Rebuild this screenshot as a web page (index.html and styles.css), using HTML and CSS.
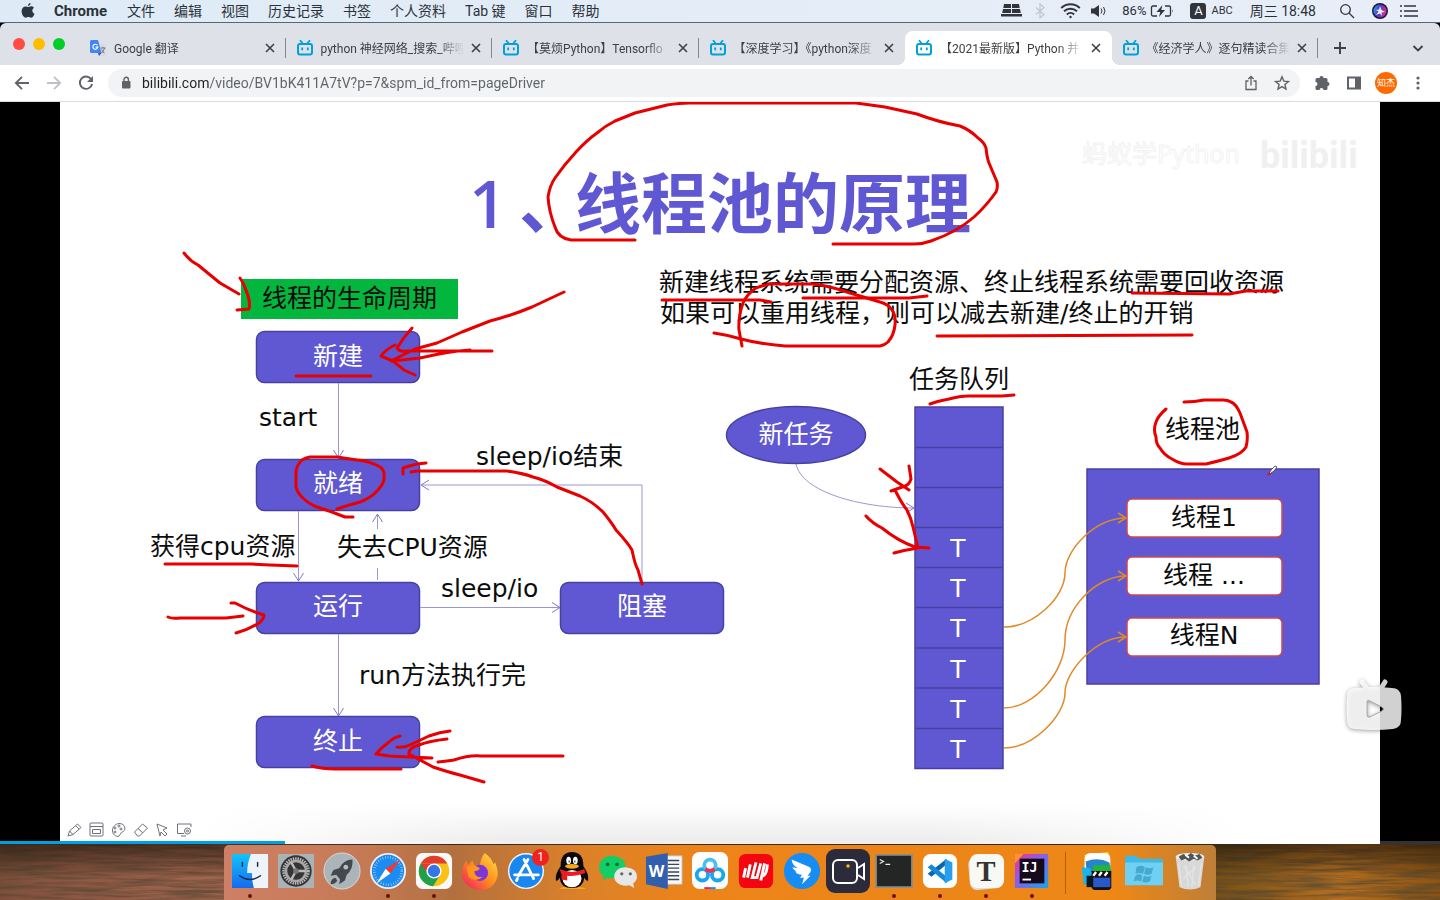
FILE: index.html
```html
<!DOCTYPE html>
<html lang="zh-CN">
<head>
<meta charset="utf-8">
<title>线程池的原理</title>
<link rel="stylesheet" href="styles.css">
</head>
<body>
<svg class="defs" width="0" height="0" aria-hidden="true">
  <symbol id="bili" viewBox="0 0 16 16"><path d="M3.500 .8l2 2.500M12.500 .8l-2 2.500" stroke="#00a1d6" stroke-width="1.800" stroke-linecap="round"/><rect x="1" y="4" width="14" height="10.500" rx="2" fill="none" stroke="#00a1d6" stroke-width="2"/><path d="M5.200 7.500v2.800M10.800 7.500v2.800" stroke="#00a1d6" stroke-width="1.800"/></symbol>
  <symbol id="x" viewBox="0 0 16 16"><path d="M4 4l8 8M12 4l-8 8" stroke="#3c4043" stroke-width="1.600"/></symbol>
</svg>

<header class="menubar">
  <svg class="apple" width="16" height="18" viewBox="0 0 16 18"><path fill="#2c3640" d="M10.600 1c.1 1.600-1.200 3-2.700 3C7.800 2.500 9.100 1.100 10.600 1zM8.200 5c.7 0 1.600-.8 3-.8 1.200 0 2.200.6 2.800 1.500-2.500 1.500-2 5 .5 6-.6 1.900-2 4-3.400 4-1 0-1.500-.6-2.700-.6s-1.700.6-2.700.6C3.800 15.700 1.600 12.500 1.600 9.300c0-3.200 2-4.900 3.900-4.900 1.200 0 2 .6 2.700.6z"/></svg>
  <nav class="menus">
    <button class="app-name">Chrome</button><button>文件</button><button>编辑</button><button>视图</button><button>历史记录</button><button>书签</button><button>个人资料</button><button>Tab 键</button><button>窗口</button><button>帮助</button>
  </nav>
  <div class="status">
    <svg width="21" height="16" viewBox="0 0 21 16" fill="#2f353b"><path d="M3 1h7v4H2.300zM11 1h7l.7 4H11zM2 6h8v4H1.200zM11 6h8l.8 4H11zM0 11h21v2.500H0z"/></svg>
    <svg class="bt" width="12" height="16" viewBox="0 0 12 16"><path d="M2 4.500l8 7-4 3.500V1l4 3.500-8 7" fill="none" stroke="#c0c6cd" stroke-width="1.200"/></svg>
    <svg class="wifi" width="21" height="16" viewBox="0 0 21 16" fill="none" stroke="#2f353b" stroke-width="1.900"><path d="M1.200 5a13.500 13.500 0 0 1 18.600 0M4 8.300a9.500 9.500 0 0 1 13 0M6.800 11.500a5.500 5.500 0 0 1 7.400 0"/><circle cx="10.500" cy="14" r="1.200" fill="#2f353b" stroke="none"/></svg>
    <svg class="vol" width="18" height="16" viewBox="0 0 18 16"><path d="M1 5.500h3L9 2v12l-5-3.500H1z" fill="#2f353b"/><path d="M11 5.500q2 2.500 0 5M13.500 4q3 4 0 8" fill="none" stroke="#2f353b"/></svg>
    <span class="pct">86%</span>
    <svg class="bat" width="24" height="16" viewBox="0 0 24 16"><path d="M7 3H3Q1.500 3 1.500 4.500v7Q1.500 13 3 13h4M15 3h4q1.500 0 1.500 1.500v7q0 1.500-1.500 1.500h-4" fill="none" stroke="#2f353b" stroke-width="1.300"/><path d="M12.500 2L6.500 9h3.800L9 14l6-7h-3.800zM22 6.500q1.500 1.500 0 3z" fill="#2f353b"/></svg>
    <span class="ime-box">A</span><span class="ime">ABC</span>
    <span class="clock">周三 18:48</span>
    <svg class="find" width="16" height="16" viewBox="0 0 16 16" fill="none" stroke="#2f353b" stroke-width="1.300"><circle cx="6.500" cy="6.500" r="4.800"/><path d="M10 10l5 5"/></svg>
    <svg class="siri" width="16" height="16" viewBox="0 0 16 16"><defs><linearGradient id="sg" x2="1" y2=".3"><stop stop-color="#29b8f0"/><stop offset=".5" stop-color="#4b38c8"/><stop offset="1" stop-color="#d02f8f"/></linearGradient></defs><circle cx="8" cy="8" r="8" fill="#171a3c"/><circle cx="8" cy="8" r="6.500" fill="url(#sg)"/><path d="M8 3l1.500 4L13 9 9.500 9.500 10 13 8 10.500 4 12l2.500-3.500L4 7l3-.5z" fill="#dff4ff"/></svg>
    <svg class="list" width="18" height="16" viewBox="0 0 18 16" stroke="#2f353b" stroke-width="1.700"><path d="M0 3h2M4 3h12M0 8h2M4 8h14M0 13h2M4 13h14"/></svg>
  </div>
</header>

<div class="tabstrip">
  <div class="lights"><button class="red" aria-label="关闭"></button><button class="yellow" aria-label="最小化"></button><button class="green" aria-label="缩放"></button></div>
  <div class="tabs">
    <div class="tab"><svg width="16" height="16" viewBox="0 0 16 16"><path d="M6 4h10v12H9z" fill="#dadce0"/><path d="M0 1.500Q0 0 1.500 0H8l3.500 13H1.500Q0 13 0 11.500z" fill="#4285f4"/><path d="M8 13h3.500L9 16z" fill="#3a4fc0"/><path d="M7.500 5.500A2.500 2.500 0 1 0 7.800 7.200H5.500" fill="none" stroke="#fff" stroke-width="1.200"/><path d="M10.500 8h5M13 6.800V8M14.500 8q-1 4-3 5M11.500 9.500q1 3 3 3.500" fill="none" stroke="#6b7178" stroke-width=".9"/></svg><button class="title">Google 翻译</button><button class="close" aria-label="关闭标签页"><svg><use href="#x"/></svg></button></div>
    <div class="tab"><svg width="16" height="16"><use href="#bili"/></svg><button class="title">python 神经网络_搜索_哔哩</button><button class="close" aria-label="关闭标签页"><svg><use href="#x"/></svg></button></div>
    <div class="tab"><svg width="16" height="16"><use href="#bili"/></svg><button class="title">【莫烦Python】Tensorflo</button><button class="close" aria-label="关闭标签页"><svg><use href="#x"/></svg></button></div>
    <div class="tab before"><svg width="16" height="16"><use href="#bili"/></svg><button class="title">【深度学习】《python深度</button><button class="close" aria-label="关闭标签页"><svg><use href="#x"/></svg></button></div>
    <div class="tab active"><svg width="16" height="16"><use href="#bili"/></svg><button class="title">【2021最新版】Python 并</button><button class="close" aria-label="关闭标签页"><svg><use href="#x"/></svg></button></div>
    <div class="tab"><svg width="16" height="16"><use href="#bili"/></svg><button class="title">《经济学人》逐句精读合集</button><button class="close" aria-label="关闭标签页"><svg><use href="#x"/></svg></button></div>
  </div>
  <div class="strip-end">
    <button aria-label="新标签页"><svg width="14" height="14" viewBox="0 0 14 14"><path d="M7 1v12M1 7h12" stroke="#3c4043" stroke-width="1.900"/></svg></button>
    <button aria-label="搜索标签页"><svg width="12" height="14" viewBox="0 0 12 14"><path d="M1.500 5l4.500 4.500L10.500 5" fill="none" stroke="#3c4043" stroke-width="1.800"/></svg></button>
  </div>
</div>

<div class="toolbar">
  <button aria-label="返回"><svg width="16" height="16" viewBox="0 0 16 16"><path d="M15 8H2M8 1.800L1.800 8 8 14.200" fill="none" stroke="#5f6368" stroke-width="1.800"/></svg></button>
  <button aria-label="前进"><svg width="16" height="16" viewBox="0 0 16 16"><path d="M1 8h13M8 1.800L14.200 8 8 14.200" fill="none" stroke="#bdc1c6" stroke-width="1.800"/></svg></button>
  <button aria-label="重新加载"><svg width="16" height="16" viewBox="0 0 16 16"><path d="M13.200 4.200A6.200 6.200 0 1 0 14.100 9" fill="none" stroke="#5f6368" stroke-width="1.900"/><path d="M15 1v6H9z" fill="#5f6368"/></svg></button>
  <div class="omnibox">
    <svg width="10" height="14" viewBox="0 0 10 14"><rect x="1" y="5" width="8.500" height="7.500" rx="1" fill="#5f6368"/><path d="M3 5V3.500a2.200 2.200 0 0 1 4.400 0V5" fill="none" stroke="#5f6368" stroke-width="1.400"/></svg>
    <input class="url" aria-label="地址和搜索栏" value="bilibili.com/video/BV1bK411A7tV?p=7&amp;spm_id_from=pageDriver">
    <button aria-label="分享"><svg width="14" height="16" viewBox="0 0 14 16" fill="none" stroke="#5f6368" stroke-width="1.300"><path d="M4.500 6H2v8.500h10V6H9.500M7 10.500V1.800M4.300 4L7 1.500 9.700 4"/></svg></button>
    <button aria-label="为此标签页添加书签"><svg width="16" height="16" viewBox="0 0 16 16"><path d="M8 1.800l1.800 4.300 4.700.4-3.600 3 1.100 4.600L8 11.600l-4 2.500 1.100-4.600-3.600-3 4.700-.4z" fill="none" stroke="#5f6368" stroke-width="1.400"/></svg></button>
  </div>
  <button aria-label="扩展程序"><svg width="16" height="16" viewBox="0 0 16 16"><path fill="#5f6368" d="M1.500 4.500Q1.500 3 3 3h2.500a2 2 0 1 1 4 0H12q1.500 0 1.500 1.500V7a2 2 0 1 1 0 4v2.500Q13.500 15 12 15H9.500a2 2 0 0 0-4 0H3q-1.500 0-1.500-1.500V11a2 2 0 0 0 0-4z"/></svg></button>
  <button aria-label="侧边栏"><svg width="16" height="16" viewBox="0 0 16 16"><path fill="#5f6368" fill-rule="evenodd" d="M1 1.500h14v13H1zM3 3.500v9h6v-9z"/></svg></button>
  <button class="avatar" aria-label="个人资料">知杰</button>
  <button aria-label="更多"><svg width="16" height="16" viewBox="0 0 16 16" fill="#5f6368"><circle cx="8" cy="3" r="1.600"/><circle cx="8" cy="8" r="1.600"/><circle cx="8" cy="13" r="1.600"/></svg></button>
</div>

<main class="stage">
<svg class="slide" viewBox="60 102 1320 742" role="img" aria-label="线程池的原理">
  <defs>
    <marker id="ab" viewBox="0 0 10 12" markerWidth="10" markerHeight="12" refX="9" refY="6" orient="auto" markerUnits="userSpaceOnUse"><path d="M1 1l8 5-8 5" fill="none" stroke="#7f7ac8"/></marker>
    <marker id="ao" viewBox="0 0 10 12" markerWidth="10" markerHeight="12" refX="9" refY="6" orient="auto" markerUnits="userSpaceOnUse"><path d="M1 1l8 5-8 5" fill="none" stroke="#e08a28" stroke-width="1.500"/></marker>
    <linearGradient id="fade" x2="0" y2="1"><stop stop-color="#000" stop-opacity="0"/><stop offset="1" stop-color="#000" stop-opacity=".08"/></linearGradient>
    <linearGradient id="side"><stop stop-color="#fff"/><stop offset=".3" stop-color="#fff" stop-opacity="0"/><stop offset=".7" stop-color="#fff" stop-opacity="0"/><stop offset="1" stop-color="#fff"/></linearGradient>
  </defs>
  <rect x="60" y="102" width="1320" height="742" fill="#fff"/>
  <rect x="200" y="804" width="1040" height="40" fill="url(#fade)"/><rect x="200" y="804" width="1040" height="40" fill="url(#side)"/>
  <g class="watermark"><text x="1082" y="163" class="wm-name">蚂蚁学Python</text><text x="1260" y="168" class="wm-logo">bilibili</text></g>
  <text class="headline" y="228"><tspan class="numeral" x="469">1</tspan><tspan x="519">、</tspan><tspan x="575">线程池的原理</tspan></text>
  <rect x="241" y="279" width="217" height="40" fill="#03b63e"/>

  <g class="node">
    <rect x="256.500" y="331.500" width="163" height="51" rx="8"/><rect x="256.500" y="459.500" width="163" height="51" rx="8"/><rect x="256.500" y="582.500" width="163" height="51" rx="8"/><rect x="560.500" y="582.500" width="163" height="51" rx="8"/><rect x="256.500" y="716.500" width="163" height="51" rx="8"/>
    <ellipse cx="796" cy="435" rx="69.500" ry="28.500"/>
    <rect x="915" y="407" width="88" height="361.500"/><path d="M915 447.500h88M915 487.500h88M915 527.500h88M915 567.500h88M915 607.500h88M915 648h88M915 688h88M915 728.500h88"/>
    <rect x="1087" y="469" width="232" height="215"/>
  </g>
  <g class="worker"><rect x="1127" y="499" width="155" height="38" rx="5"/><rect x="1127" y="557" width="155" height="38" rx="5"/><rect x="1127" y="618" width="155" height="38" rx="5"/></g>
  <g class="flow">
    <path d="M338.500 383v75"/><path d="M298.500 511v70"/><path d="M377.500 529v-15"/><path d="M338.500 634v82"/><path d="M420 607.500h140"/><path d="M642 582V485H421"/><path d="M796 464C802 492 860 508 914 508"/>
  </g>
  <path d="M377.500 568v12" stroke="#9b97d2"/>
  <g class="dispatch"><path d="M1004 627C1034 627 1065 597 1065 573S1096 518 1126 518"/><path d="M1004 708C1034 708 1065 672 1065 640S1096 576 1126 576"/><path d="M1004 748C1034 748 1065 715 1065 693S1096 637 1126 637"/></g>

  <g class="label">
    <text x="262" y="307">线程的生命周期</text><text x="259" y="426">start</text><text x="476" y="465">sleep/io结束</text><text x="150" y="555">获得cpu资源</text><text x="337" y="556">失去CPU资源</text><text x="441" y="597">sleep/io</text><text x="359" y="684">run方法执行完</text>
    <text x="659" y="291">新建线程系统需要分配资源、终止线程系统需要回收资源</text><text x="660" y="322">如果可以重用线程，则可以减去新建/终止的开销</text>
    <text x="909" y="388">任务队列</text><text x="1165" y="438">线程池</text>
    <g class="mid"><text x="1204" y="526">线程1</text><text x="1204" y="584">线程 ...</text><text x="1204" y="644">线程N</text></g>
    <g class="mid light"><text x="338" y="365">新建</text><text x="338" y="492">就绪</text><text x="338" y="615">运行</text><text x="642" y="615">阻塞</text><text x="338" y="750">终止</text><text x="796" y="443">新任务</text>
    <text x="958" y="557">T</text><text x="958" y="597">T</text><text x="958" y="637">T</text><text x="958" y="678">T</text><text x="958" y="718">T</text><text x="958" y="758">T</text></g>
  </g>

  <g class="ink">
    <path d="M635 240H571Q558 238 555 227Q549 212 548 197Q550 185 555 178Q564 165 576 152Q587 140 597 133Q605 126 615 121L635 113L667 105Q680 103 689 103H856L885 107L917 114Q938 122 960 126Q970 130 978 138Q984 142 986 148Q987 158 989 163L997 182Q998 188 996 192Q987 205 974 217Q957 232 931 241Q923 244 914 244H833"/>
    <path d="M184 253Q190 261 198 265L220 283L239 294M240 278Q244 284 245 288Q251 301 249 309L237 310"/>
    <path d="M564 292L532 307Q513 315 490 321L462 332L437 343L415 349L391 361M395 345Q385 350 381 356L393 361L404 370L415 375M412 328Q403 338 397 348Q399 352 407 351H492M470 350Q450 351 420 358L392 361M296 376H371"/>
    <path d="M337 509Q349 505 360 502Q371 498 378 490Q385 482 384 477Q385 470 380 467Q370 461 357 460L337 457H310Q305 458 302 460Q296 466 296 472V487Q298 494 303 498Q309 504 317 507Q330 511 345 517H353"/>
    <path d="M403 474V468Q409 466 417 464L426 463M411 472L417 471H507Q522 473 533 477Q545 480 557 487L580 496Q593 502 603 512Q612 523 616 530Q628 543 632 550Q635 565 638 570L642 584"/>
    <path d="M165 564H251L270 565L297 566M168 617Q172 619 180 618H226L243 616M231 603H235Q250 611 264 615Q264 619 259 623Q248 630 236 633M312 766Q322 769 335 769H401"/>
    <path d="M400 736Q393 738 389 742Q381 748 376 754L389 756L432 758M397 747Q405 748 412 744L429 736Q440 732 450 731M447 739Q429 741 419 745Q408 748 409 754L433 767Q448 772 460 775L484 782M438 762Q448 761 454 760Q469 755 481 756H563"/>
    <path d="M662 300H760L771 302M803 298H909L927 296M1132 293L1229 294L1246 291H1278M937 336L1192 335"/>
    <path d="M714 333Q728 335 741 339Q760 344 785 346H880Q885 345 888 342Q894 335 895 325Q896 315 892 310Q888 304 880 302L850 293Q830 286 813 284H770Q760 286 756 288Q747 294 743 303Q738 317 739 330L742 346"/>
    <path d="M930 404Q938 401 949 399Q960 396 968 396H1002L1014 395M1166 409Q1158 416 1156 422Q1153 430 1156 437Q1156 444 1160 448Q1164 455 1172 459Q1180 464 1187 464H1206Q1219 461 1229 458Q1242 454 1246 447Q1248 440 1247 432L1240 413Q1236 404 1231 402Q1228 400 1223 400H1204Q1195 402 1184 402"/>
    <path d="M880 469L897 482L909 490M909 466Q910 472 911 479Q909 485 905 486L891 491M895 490Q902 504 907 510Q911 518 913 527L918 548M866 516Q872 523 882 528Q898 541 915 547L929 548M894 553Q905 550 918 548"/>
  </g>
  <path d="M1268 475l3-5 4-4 2 1-3 4z" fill="#fff" stroke="#333" stroke-width=".8"/><path d="M1267 476l2-4 2 2z" fill="#d11"/>
  <g class="pen-tools" fill="none" stroke="#70707a">
    <path d="M68 836l1.500-5 8-7 3.500 3.500-8 7zM69.500 831l3.500 3.500M76 826l3 3"/>
    <rect x="90" y="823" width="13" height="13" rx="1"/><path d="M90 826.500h13M92.500 829.500h8v4h-8z"/>
    <path d="M118 836.500c-8-1-7-12 1-13 7 0 7 7 4 8s-3 5-5 5z"/><circle cx="115" cy="828" r="1"/><circle cx="119" cy="826" r="1"/><circle cx="115" cy="832" r="1"/><circle cx="121" cy="829" r="1"/>
    <path d="M134.500 832l8-8 5 4-8 8h-2zM138 828.500l5 4.500"/>
    <path d="M157 824l10 4-4 2 4 4-2 2-4-4-1 4z"/>
    <path d="M184 833.500h-6.500V824H191v3M181 836h5"/><circle cx="187.500" cy="831" r="3"/><circle cx="187.500" cy="831" r="1"/>
  </g>
</svg>
<div class="scrub"><div class="played"></div></div>
<button class="badge" aria-label="播放"><svg width="60" height="60" viewBox="0 0 60 60"><g opacity=".82"><path d="M18 4l6 8M41 4l-5 8" stroke="#fff" stroke-width="5" stroke-linecap="round"/><path fill="#fff" fill-rule="evenodd" d="M11 10q19-2 37 0 8 0 9 8 1 12 0 24 0 8-8 9-19 2-38 0-8 0-8-9-1-12 0-24 0-8 8-8zM23 24v13q0 3 3 2l12-6q3-2 0-4l-12-6q-3-2-3 1z"/></g><path d="M23 24v13q0 3 3 2l12-6q3-2 0-4l-12-6q-3-2-3 1z" fill="none" stroke="#aaa"/></svg></button>
</main>

<footer class="desktop">
<svg class="wall" aria-hidden="true">
  <defs><filter id="grain" x="0" y="0" width="100%" height="100%"><feTurbulence type="fractalNoise" baseFrequency=".018 .28" numOctaves="4" seed="7"/><feColorMatrix values="0 0 0 0 .08  0 0 0 0 .06  0 0 0 0 .03  2.200 0 0 0 -.7"/></filter>
  <linearGradient id="wood"><stop stop-color="#80503c"/><stop offset=".13" stop-color="#a2644e"/><stop offset=".83" stop-color="#6e4a14"/><stop offset=".93" stop-color="#b87020"/><stop offset="1" stop-color="#8c5312"/></linearGradient>
  <linearGradient id="dusk" x2="0" y2="1"><stop stop-color="#1a1008" stop-opacity=".6"/><stop offset=".6" stop-color="#1a1008" stop-opacity="0"/></linearGradient></defs>
  <rect width="100%" height="100%" fill="url(#wood)"/><rect width="100%" height="100%" filter="url(#grain)" opacity=".7"/><rect width="100%" height="100%" fill="url(#dusk)"/>
</svg>
<nav class="dock">
  <button class="run" aria-label="访达"><svg viewBox="0 0 40 40"><defs><linearGradient id="fb" x2="0" y2="1"><stop stop-color="#12c4fb"/><stop offset="1" stop-color="#1769ef"/></linearGradient></defs><path d="M1 2h38v36H1z" fill="#eef3fb"/><path d="M1 2h20q-4 10-4 20h5q0 8 2 16H1z" fill="url(#fb)"/><path d="M12 11v4M28 11v4M9 25q11 8 22 0" fill="none" stroke="#132a45" stroke-width="1.500" stroke-linecap="round"/></svg></button>
  <button aria-label="系统偏好设置"><svg viewBox="0 0 40 40"><path d="M1 2h38v36H1z" fill="#a9b3b6"/><circle cx="20" cy="20" r="16.500" fill="#353535"/><circle cx="20" cy="20" r="13" fill="none" stroke="#bcbcbc" stroke-width="3" stroke-dasharray="1.500 1"/><circle cx="20" cy="20" r="10.500" fill="none" stroke="#a8a8a8" stroke-width="2.500"/><path d="M20 20h10M20 20l-5-9M20 20l-5 9" stroke="#bbb" stroke-width="2.500"/><circle cx="20" cy="20" r="3" fill="#777"/></svg></button>
  <button aria-label="启动台"><svg viewBox="0 0 40 40"><circle cx="20" cy="20" r="19" fill="#aab4b9" stroke="#d5dcdf"/><path d="M31 8q-9 0-14 9l-6 2-3 6 6-1 4 5-1 5 6-4 2-6q7-6 6-16zM13 27q-5 1-5 7 5 0 7-4z" fill="#43484d"/><circle cx="24" cy="16" r="2.500" fill="#b5bdc1"/></svg></button>
  <button class="run" aria-label="Safari"><svg viewBox="0 0 40 40"><circle cx="20" cy="20" r="19" fill="#eceff2"/><circle cx="20" cy="20" r="17" fill="#1c8bf2"/><circle cx="20" cy="20" r="14.500" fill="none" stroke="#a9dcff" stroke-width="2.500" stroke-dasharray=".7 2"/><path d="M33 8L17.500 17.500l5 5z" fill="#f03a2e"/><path d="M8 33l9.500-15.500 5 5z" fill="#fff"/></svg></button>
  <button class="run" aria-label="Chrome"><svg viewBox="0 0 40 40"><rect x="1" y="1" width="38" height="38" rx="7" fill="#fafafa"/><circle cx="20" cy="20" r="16" fill="#fbc116"/><path d="M6.100 12a16 16 0 0 1 27.800 0H20z" fill="#e33b2e"/><path d="M6.100 12A16 16 0 0 0 19 36l7.500-12z" fill="#1fa04b"/><path d="M6.100 12L14 24l6-12z" fill="#e33b2e"/><circle cx="20" cy="20" r="8" fill="#fff"/><circle cx="20" cy="20" r="6.500" fill="#3277e8"/></svg></button>
  <button aria-label="Firefox"><svg viewBox="0 0 40 40"><defs><linearGradient id="ff" x1="1" x2="0" y2="1"><stop stop-color="#ffe44a"/><stop offset=".5" stop-color="#ff8a1c"/><stop offset="1" stop-color="#f2146e"/></linearGradient></defs><path d="M25 1q8 6 9 12l2-2q4 10 2 16-4 13-18 13Q4 39 1 24q0-9 5-15l1 5 5-5 2 5 6 1q0-8 5-14z" fill="url(#ff)"/><circle cx="20" cy="22" r="8.500" fill="#7b35d8"/><path d="M6 16q7-4 14 1-2 3-6 3 1 8 9 6-8 7-15 0z" fill="#ff941e"/></svg></button>
  <button aria-label="App Store"><svg viewBox="0 0 40 40"><circle cx="20" cy="20" r="19" fill="#eef4fa"/><circle cx="20" cy="20" r="17.500" fill="#1987ef"/><path d="M18 8l10 20M22 8L12 25M8 24h16M28 24h5M11 28l-1 2" stroke="#fff" stroke-width="3" stroke-linecap="round"/></svg><span class="count">1</span></button>
  <button aria-label="QQ"><svg viewBox="0 0 40 40"><path d="M10 37q10-4 20 0v2H6zM20 36l14 2v1H22z" fill="#f6a914"/><path d="M20 0q12 0 12 15 6 8 5 15-2 1-4-3-1 11-13 11T7 27q-2 4-4 3-1-7 5-15Q8 0 20 0z" fill="#0b0b0d"/><ellipse cx="20" cy="28" rx="10" ry="9" fill="#fff"/><ellipse cx="16.500" cy="9" rx="2.500" ry="4" fill="#fff"/><ellipse cx="23.500" cy="9" rx="2.500" ry="4" fill="#fff"/><path d="M17 9v2M23 9v2" stroke="#000"/><ellipse cx="20" cy="15" rx="7" ry="2.500" fill="#f6a914"/><path d="M7 18q13 6 26 0l1 4q-11 4-19 3v5l-6-1V24z" fill="#e91c22"/></svg></button>
  <button aria-label="微信"><svg viewBox="0 0 40 40"><path d="M14 4C5 4 0 10 0 16q0 6 5 9l-1 5 5-3q15 3 19-10Q28 5 14 4z" fill="#13ce66"/><path d="M28 16c-8 0-12 5-12 10s6 11 16 9l5 3-1-5q4-3 4-7 0-9-12-10z" fill="#e7e7e7"/><circle cx="9" cy="13" r="2" fill="#0b7438"/><circle cx="19" cy="13" r="2" fill="#0b7438"/><circle cx="24" cy="23" r="1.700" fill="#666"/><circle cx="33" cy="23" r="1.700" fill="#666"/></svg></button>
  <button aria-label="Word"><svg viewBox="0 0 40 40"><path d="M20 4h19v30H20z" fill="#f8f8f8" stroke="#bbb"/><path d="M24 9h12M24 13h12M24 17h12M24 21h12M24 25h12M24 29h12" stroke="#38475e" stroke-width="1.500"/><path d="M1 5l23-4v38L1 34z" fill="#315fae"/><text x="4" y="26" class="word">W</text></svg></button>
  <button aria-label="百度网盘"><svg viewBox="0 0 40 40"><rect x="1" y="0" width="38" height="39" rx="8" fill="#fff"/><g fill="none" stroke-width="4"><circle cx="12" cy="24" r="6" stroke="#17a7ee"/><circle cx="28" cy="24" r="6" stroke="#17a7ee"/><circle cx="20" cy="14" r="6" stroke="#4ac0ee"/><path d="M15 18q5 4 10 0" stroke="#ee315a"/></g><path d="M14 37h6v2h-6z" fill="#e91e63"/><path d="M20 37h6v2h-6z" fill="#2684f5"/></svg></button>
  <button aria-label="词典"><svg viewBox="0 0 40 40"><rect x="2" y="2" width="36" height="36" rx="7" fill="#f30610"/><path d="M9 17L7 27M14 13l-3 14M20 11l-4 16h5l4-15M29 12l-4 18M25 25q6 2 7-12" fill="none" stroke="#fff" stroke-width="3"/></svg></button>
  <button aria-label="钉钉"><svg viewBox="0 0 40 40"><circle cx="20" cy="20" r="19" fill="#168cf5"/><path d="M9 8l17 7q5 2 3 6l-3 4h3l-9 9 2-7h-4l2-3q-6 0-7-4l4 1q-6-1-7-5l6 1q-6-2-7-9z" fill="#fff"/></svg></button>
  <button class="big" aria-label="录屏"><svg viewBox="0 0 44 44"><rect width="44" height="44" rx="9" fill="#2c2b3b"/><rect x="7" y="11" width="24" height="23" rx="5" fill="none" stroke="#fff" stroke-width="2"/><path d="M32 19l6-4v15l-6-4" fill="none" stroke="#fff" stroke-width="2"/><circle cx="22" cy="17" r="1.700" fill="#f6bd18"/></svg></button>
  <button class="run" aria-label="终端"><svg viewBox="0 0 40 40"><path d="M0 2h40v36H0z" fill="#8c8c88"/><path d="M2 4h36v32H2z" fill="#242525"/><path d="M5 8l4 2-4 2M11 13h5" fill="none" stroke="#eee" stroke-width="1.200"/></svg></button>
  <button class="run" aria-label="Visual Studio Code"><svg viewBox="0 0 40 40"><rect x="2" y="2" width="36" height="36" rx="8" fill="#fff"/><path d="M27 7v6L11 26l-4-3z" fill="#0866ab"/><path d="M27 33v-7L11 13l-4 3z" fill="#168ad6"/><path d="M25 7l8 4v18l-8 4z" fill="#26a0ee"/></svg></button>
  <button class="run" aria-label="Typora"><svg viewBox="0 0 40 40"><rect x="2" y="5" width="34" height="34" rx="7" fill="#ddd" transform="rotate(-5 20 20)"/><rect x="3" y="2" width="36" height="36" rx="8" fill="#f8f8f5"/><text x="20" y="30" class="typo">T</text></svg></button>
  <button class="run" aria-label="IntelliJ IDEA"><svg viewBox="0 0 40 40"><defs><linearGradient id="ij" x2="1" y2="1"><stop stop-color="#fa3476"/><stop offset=".4" stop-color="#9358ee"/><stop offset="1" stop-color="#12a7ef"/></linearGradient></defs><path d="M2 2h35v36H2z" fill="url(#ij)"/><path d="M2 2h9L2 12z" fill="#ff9232"/><path d="M7 7h26v26H7z" fill="#15091c"/><text x="9" y="21" class="idea">IJ</text><path d="M10 29h9" stroke="#fff" stroke-width="2"/></svg></button>
  <span class="divider"></span>
  <button aria-label="AnyMP4"><svg viewBox="0 0 40 40"><path d="M6 3l25-3 3 26-28-5z" fill="#ffd239"/><rect x="6" y="1" width="27" height="25" rx="6" fill="#fff"/><path d="M7 10q13-5 25 1l2 10H8z" fill="#2386ce"/><path d="M3 16l9 1 3 18-10-1z" fill="#18b4ed"/><path d="M15 14h18v8l-18-1z" fill="#20b832"/><path d="M8 25h6v12H8z" fill="#0a1724"/><path d="M13 20h21v17q-1 3-4 3H17q-4 0-4-5z" fill="#111"/><path d="M15 27h18v10H15z" fill="#2858c9"/><path d="M15 25l3-4M21 25l3-4M27 25l3-4" stroke="#fff" stroke-width="2.500"/></svg></button>
  <button aria-label="文件夹"><svg viewBox="0 0 40 40"><path d="M0 6q0-2 2-2h10l3 3h23q2 0 2 2v26H0z" fill="#3eb9e4"/><path d="M0 11h40v24H0z" fill="#70d0f4"/><path d="M12 16q5-3 9 0l-2 7q-4-2-8 0zM22 16q4 2 8 0l-2 7q-4 2-8 0zM11 25q4-3 7 0l-1 6q-4-2-8 0zM20 25q4 2 8 0l-2 6q-4 2-8 0z" fill="#45aacd"/></svg></button>
  <button aria-label="废纸篓"><svg viewBox="0 0 40 40"><path d="M5 5h30l-4 32q-11 5-22 0z" fill="#d8d8d8"/><path d="M8 12l3 24M32 12l-3 24M16 14l2 23M24 14l-2 23M13 28l13-12M14 15l12 20" stroke="#e4e4e4" stroke-width="1.500"/><ellipse cx="20" cy="5" rx="15" ry="4" fill="#ececec"/><path d="M8 5l5-3 4 2 4-3 4 3 5-2 3 4-5 3-4-2-5 3-4-3-4 2z" fill="#4d5559"/><path d="M15 3l4 3M24 4l4 3" stroke="#fff" stroke-width="2"/></svg></button>
</nav>
</footer>
</body>
</html>
```
FILE: styles.css
```css
* { box-sizing: border-box; }
body { margin: 0; height: 100vh; display: flex; flex-direction: column; overflow: hidden; font-family: Roboto, "Noto Sans CJK SC", sans-serif; background: #000; color: #2b3138; }
button { appearance: none; border: 0; padding: 0; margin: 0; background: none; font: inherit; color: inherit; display: flex; align-items: center; justify-content: center; }
svg { display: block; flex: none; }
.defs { position: absolute; }

.menubar { height: 23px; flex: none; display: flex; align-items: center; padding: 0 22px 0 20px; background: linear-gradient(90deg, #deebf6, #e9eef8); border-bottom: 1px solid #56677a; font-size: 14px; line-height: 22px; white-space: nowrap; }
.apple { margin-right: 18px; }
.menus { display: flex; gap: 19px; }
.app-name { font-weight: 700; font-size: 15px; margin-right: 1px; }
.status { margin-left: auto; display: flex; align-items: center; }
.bt { margin-left: 12px; }
.wifi { margin-left: 14px; }
.vol { margin-left: 9px; }
.pct { margin-left: 14px; font-size: 13px; }
.bat { margin-left: 4px; }
.ime-box { margin-left: 16px; width: 16px; height: 16px; border-radius: 3px; background: #2f353b; color: #fff; text-align: center; font-size: 13px; line-height: 16px; }
.ime { margin-left: 5px; font-size: 11px; }
.clock { margin-left: 17px; }
.find { margin-left: 23px; }
.siri { margin-left: 17px; }
.list { margin-left: 12px; }

.tabstrip { height: 42px; flex: none; display: flex; align-items: flex-end; background: #dee1e8; border-radius: 6px 6px 0 0; }
.lights { width: 79px; height: 42px; flex: none; display: flex; align-items: center; gap: 8px; padding-left: 13px; }
.lights button { width: 12px; height: 12px; border-radius: 50%; }
.lights .red { background: #ff4b42; }
.lights .yellow { background: #ffbd00; }
.lights .green { background: #00ce26; }
.tabs { flex: 1; min-width: 0; display: flex; }
.tab { position: relative; flex: 1; min-width: 0; height: 34px; display: flex; align-items: center; padding: 0 8px 0 11px; font-size: 12px; color: #3c4043; }
.tab::after { content: ""; position: absolute; right: 0; top: 7px; width: 1px; height: 20px; background: #85898f; }
.tab.before::after { display: none; }
.tab .title { flex: 1; min-width: 0; margin: 0 4px 0 8px; padding-bottom: 2px; justify-content: flex-start; overflow: hidden; white-space: nowrap; mask-image: linear-gradient(90deg, #000 calc(100% - 26px), transparent); }
.close svg { width: 16px; height: 16px; }
.tab.active { background: #fff; border-radius: 8px 8px 0 0; }
.tab.active::before, .tab.active::after { content: ""; position: absolute; top: auto; bottom: 0; width: 8px; height: 8px; }
.tab.active::before { left: -8px; background: radial-gradient(circle at 0 0, transparent 8px, #fff 8px); }
.tab.active::after { right: -8px; background: radial-gradient(circle at 100% 0, transparent 8px, #fff 8px); }
.strip-end { width: 122px; height: 34px; flex: none; display: flex; justify-content: space-between; align-items: center; padding: 0 16px 0 15px; }

.toolbar { height: 37px; flex: none; display: flex; align-items: center; gap: 16px; padding: 0 14px; background: #fff; border-bottom: 1px solid #d9dbde; }
.omnibox { flex: 1; min-width: 0; height: 28px; display: flex; align-items: center; gap: 16px; margin-left: -2px; margin-right: -2px; padding: 0 10px 0 13px; border-radius: 14px; background: #f1f3f4; }
.url { flex: 1; min-width: 0; border: 0; outline: 0; padding: 0; margin-left: -5px; font-family: Roboto, sans-serif; font-size: 14px; line-height: 20px; color: transparent; background: linear-gradient(90deg, #202124 68px, #5f6368 68px); background-clip: text; -webkit-background-clip: text; }
.avatar { width: 22px; height: 22px; border-radius: 50%; margin: 0 -3px; background: #ff6a00; color: #fff; font-size: 9px; line-height: 22px; }

.stage { position: relative; flex: 1; min-height: 0; display: flex; justify-content: center; background: #000; }
.slide { width: auto; height: 100%; max-width: 100%; }
.headline { font: 700 66px "Noto Sans CJK SC", sans-serif; fill: #6058d2; }
.numeral { font-family: "Open Sans", sans-serif; font-weight: 600; }
.label { font: 25px "DejaVu Sans", "Noto Sans CJK SC", sans-serif; fill: #0c0c0c; }
.mid { text-anchor: middle; }
.light { fill: #fff; }
.node { fill: #6058d2; stroke: #4740a0; stroke-width: 1.5; }
.worker { fill: #fff; stroke: #cf4650; stroke-width: 1.5; }
.flow path { fill: none; stroke: #9b97d2; marker-end: url(#ab); }
.dispatch path { fill: none; stroke: #e08a28; stroke-width: 1.5; marker-end: url(#ao); }
.ink { fill: none; stroke: #e80000; stroke-width: 3; stroke-linecap: round; stroke-linejoin: round; }
.wm-name { font: 25px "Noto Sans", "Noto Sans CJK SC", sans-serif; fill: #fff; stroke: #f3f3f3; }
.wm-logo { font: 700 36px Roboto, sans-serif; fill: #f0f0f0; }
.scrub { position: absolute; left: 0; right: 0; bottom: 0; height: 3px; background: rgba(255, 255, 255, .2); }
.played { width: 19.8%; height: 3px; background: #00a1e0; }
.badge { position: absolute; right: 36px; bottom: 106px; filter: drop-shadow(0 1px 2px rgba(0, 0, 0, .45)); }

.desktop { position: relative; flex: none; height: 56px; display: flex; justify-content: center; padding-top: 1px; background: #1b120a; }
.wall { position: absolute; inset: 0; width: 100%; height: 100%; }
.dock { position: relative; display: flex; align-items: center; padding: 0 3px; border-radius: 5px 5px 0 0; background: linear-gradient(90deg, #cd8065, #c57a55 14%, #b2703f 23%, #dc8129 36%, #ec841a 48%, #ed8716 90%, #bd7f38); }
.dock button { position: relative; width: 46px; height: 55px; padding-bottom: 3px; }
.dock svg { width: 38px; height: 38px; }
.dock .big svg { width: 44px; height: 44px; }
.run::after { content: ""; position: absolute; left: 21px; bottom: 2px; width: 4px; height: 4px; border-radius: 50%; background: #681006; }
.count { position: absolute; top: 4px; right: 0; width: 17px; height: 17px; border-radius: 50%; background: #f0221f; color: #fff; font-size: 12px; line-height: 17px; text-align: center; }
.divider { width: 20px; height: 42px; border-left: 1px solid #b55e0c; margin-left: 10px; margin-right: -10px; }
.word { font: 700 17px "Open Sans", sans-serif; fill: #fff; }
.typo { font: 700 30px "Liberation Serif", serif; fill: #333; text-anchor: middle; }
.idea { font: 700 14px "DejaVu Sans Mono", monospace; fill: #fff; }
```
